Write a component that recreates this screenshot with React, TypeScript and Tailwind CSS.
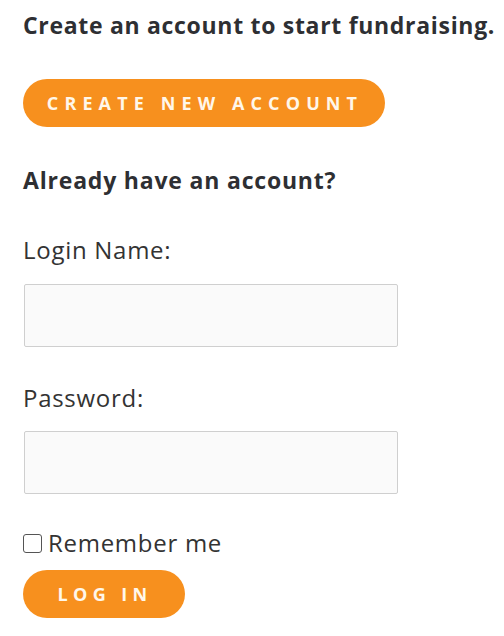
import React, { useState } from 'react';

const font = { fontFamily: '"Open Sans", Lato, sans-serif' };

export default function App() {
    const [remember, setRemember] = useState(false);

    return (
        <div className="min-h-[636px] bg-white px-[23px] pt-[10px] text-[#2e2f33]" style={font}>
            <h2 className="whitespace-nowrap text-[23px] font-bold leading-[30px] tracking-[0.03em]">Create an account to start fundraising.</h2>
            <button className="mt-[39px] h-[48px] w-[362px] rounded-full bg-[#f7901e] pl-[2px] text-[18px] font-bold tracking-[0.34em] text-[#fff7ea]">
                CREATE NEW ACCOUNT
            </button>

            <h3 className="mt-[38px] text-[23px] font-bold leading-[30px] tracking-[0.035em]">Already have an account?</h3>

            <label className="mt-[40px] block text-[24px] leading-[30px] tracking-[0.03em] text-[#333]">Login Name:</label>
            <input
                type="text"
                className="ml-px mt-[19px] block h-[63px] w-[374px] rounded-[2px] border border-[#cfcfcf] bg-[#fafafa] outline-none"
            />

            <label className="mt-[36px] block text-[24px] leading-[30px] tracking-[0.03em] text-[#333]">Password:</label>
            <input
                type="password"
                className="ml-px mt-[18px] block h-[63px] w-[374px] rounded-[2px] border border-[#cfcfcf] bg-[#fafafa] outline-none"
            />

            <label className="mt-[34px] flex items-center gap-[6px] text-[24px] leading-[30px] tracking-[0.03em] text-[#333]">
                <input
                    type="checkbox"
                    checked={remember}
                    onChange={e => setRemember(e.target.checked)}
                    className="h-[19px] w-[19px] appearance-none rounded-[3px] border border-[#555] bg-white"
                />
                Remember me
            </label>

            <button className="mt-[12px] h-[48px] w-[162px] rounded-full bg-[#f7901e] pl-[2px] text-[18px] font-bold tracking-[0.3em] text-[#fff7ea]">
                LOG IN
            </button>
        </div>
    );
}
